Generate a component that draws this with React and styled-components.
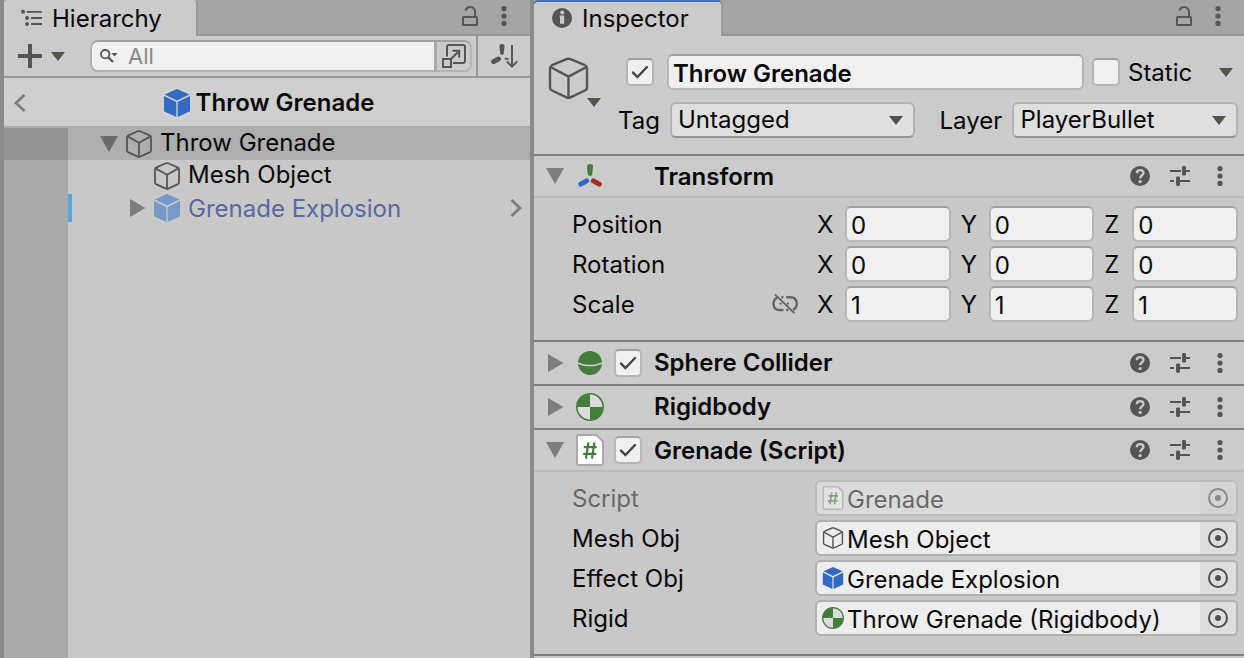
import {useId} from "react";
import styled, {createGlobalStyle} from "styled-components";

const GlobalStyle = createGlobalStyle`
  * {
    box-sizing: border-box;
  }

  body {
    margin: 0;
    background: #8a8a8a;
    color: #090909;
    font: 400 24px/30px Inter, "Liberation Sans", sans-serif;
  }

  button,
  input,
  select {
    margin: 0;
    color: inherit;
    font: inherit;
  }

  svg {
    display: block;
    flex: none;
  }
`;

const Editor = styled.main`
  display: grid;
  grid-template-columns: minmax(0, 526fr) minmax(0, 710fr);
  gap: 4px;
  min-height: 100vh;
  padding-left: 4px;
`;

const Panel = styled.section`
  display: flex;
  flex-direction: column;
  background: #c8c8c8;
`;

const TabBar = styled.header`
  display: flex;
  align-items: flex-start;
  height: 36px;
  background: #a5a5a5;
  box-shadow: inset 0 -2px #989898;
`;

const Tab = styled.h1`
  display: flex;
  align-items: center;
  gap: 10px;
  height: 36px;
  margin: 0 auto 0 0;
  padding: ${(props) => (props.$active ? "2px 32px 0 18px" : "2px 34px 0 16px")};
  border-right: 2px solid #999;
  border-radius: 4px 4px 0 0;
  background: #cbcbcb;
  box-shadow: ${(props) => (props.$active ? "inset 0 2px #4a72b0" : "none")};
  font-size: 24px;
  font-weight: 400;

  & > svg {
    margin-bottom: 2px;
  }
`;

const TabTools = styled.div`
  display: flex;
  gap: 14px;
  padding: 6px 16px 0 0;
`;

const IconButton = styled.button`
  display: grid;
  place-items: center;
  min-width: 20px;
  height: 20px;
  padding: 0;
  border: 0;
  background: transparent;
  cursor: pointer;
`;

const Toolbar = styled.div`
  display: flex;
  align-items: center;
  height: 42px;
  border-bottom: 2px solid #999;
  background: #cbcbcb;
`;

const AddButton = styled(IconButton)`
  grid-auto-flow: column;
  gap: 9px;
  height: 32px;
  margin: 0 25px 0 14px;
`;

const SearchBox = styled.div`
  display: flex;
  flex: 1;
  align-items: center;
  min-width: 0;
  height: 32px;
  margin-right: 4px;
  padding-left: 8px;
  border: 2px solid #b2b2b2;
  border-top-color: #a0a0a0;
  border-radius: 8px;
  background: #f0f0f0;
  overflow: hidden;
`;

const SearchInput = styled.input`
  flex: 1;
  min-width: 0;
  padding: 0 10px;
  border: 0;
  outline: none;
  background: transparent;
  font-size: 22px;

  &::placeholder {
    color: #888;
    opacity: 1;
  }
`;

const PopoutButton = styled(IconButton)`
  width: 36px;
  height: 32px;
  border-left: 3px solid #aaa;
  background: #cbcbcb;
`;

const SortButton = styled(IconButton)`
  width: 54px;
  height: 40px;
  border-left: 2px solid #999;
`;

const PrefabHeader = styled.div`
  display: grid;
  grid-template-columns: 1fr auto 1fr;
  align-items: center;
  height: 50px;
  padding: 2px 6px 0 10px;
  border-bottom: 2px solid #acacac;
  background: #cfcfcf;
`;

const PrefabName = styled.h2`
  display: flex;
  align-items: center;
  gap: 6px;
  margin: 0;
  font-size: 24px;
  font-weight: 600;
`;

const BackButton = styled(IconButton)`
  place-items: center start;
`;

const Tree = styled.ul`
  flex: 1;
  margin: 0;
  padding: 0;
  background: linear-gradient(to right, #aaa 64px, #c8c8c8 64px);
  list-style: none;
`;

const TreeRow = styled.li`
  display: flex;
  align-items: center;
  height: 32px;
  padding-right: 4px;
  background: ${(props) => (props.$selected ? "linear-gradient(to right, #939393 64px, #aeaeae 64px)" : "none")};
  color: ${(props) => (props.$prefab ? "#576aa3" : "inherit")};
`;

const OverrideBar = styled.span`
  width: 4px;
  height: 28px;
  margin-left: 64px;
  background: ${(props) => (props.$visible ? "#5aa5dc" : "transparent")};
`;

const TreeFold = styled.span`
  display: grid;
  place-items: center;
  width: 18px;
  margin: 0 8px 0 ${(props) => 28 + props.$depth * 28}px;
`;

const TreeLabel = styled.span`
  flex: 1;
  padding: ${(props) => (props.$prefab ? "2px 0 0 8px" : "0 0 2px 8px")};
`;

const ObjectHead = styled.div`
  display: flex;
  gap: 16px;
  padding: 18px 6px 16px 14px;
  border-bottom: 2px solid #7f7f7f;
  background: #cbcbcb;
`;

const ObjectIconButton = styled(IconButton)`
  width: 54px;
  height: 54px;
`;

const HeadRows = styled.div`
  display: flex;
  flex: 1;
  flex-direction: column;
  gap: 12px;
  min-width: 0;
`;

const HeadRow = styled.div`
  display: flex;
  align-items: center;
  height: 36px;
`;

const NameRow = styled(HeadRow)`
  gap: 8px;
  padding: 0 2px 0 8px;
`;

const StaticLabel = styled.label`
  flex: none;
  width: 80px;
  padding-top: 2px;
`;

const TagLabel = styled.label`
  flex: none;
  width: 52px;
  padding-top: 2px;
`;

const LayerLabel = styled(TagLabel)`
  width: 73px;
  margin-left: 24px;
`;

const TextInput = styled.input`
  width: 100%;
  min-width: 0;
  height: 36px;
  padding: 2px 4px 0;
  border: 2px solid #b7b7b7;
  border-top-color: #a0a0a0;
  border-radius: 6px;
  outline: none;
  background: #f0f0f0;
`;

const NameInput = styled(TextInput)`
  flex: 1;
  margin-left: 5px;
  font-weight: 600;
`;

const SelectWrap = styled.span`
  display: grid;
  flex: ${(props) => props.$grow} 1 0;
  align-items: center;
  min-width: 0;

  & > * {
    grid-area: 1 / 1;
  }

  & > svg {
    justify-self: end;
    margin-right: 12px;
    pointer-events: none;
  }
`;

const Select = styled.select`
  width: 100%;
  height: 36px;
  padding: 0 32px 0 6px;
  border: 2px solid #b2b2b2;
  border-bottom-color: #939393;
  border-radius: 6px;
  outline: none;
  background: #dfdfdf;
  appearance: none;
`;

const CheckWrap = styled.span`
  display: grid;
  flex: none;
  width: 28px;
  height: 28px;

  & > * {
    grid-area: 1 / 1;
  }

  & > svg {
    visibility: hidden;
    pointer-events: none;
  }

  & > input:checked + svg {
    visibility: visible;
  }
`;

const CheckInput = styled.input`
  width: 28px;
  height: 28px;
  border: 2px solid #b7b7b7;
  border-top-color: #a0a0a0;
  border-radius: 5px;
  background: #f0f0f0;
  appearance: none;
`;

const ComponentHeader = styled.header`
  display: grid;
  grid-template-columns: 20px 28px 28px 1fr auto;
  align-items: center;
  gap: 10px;
  height: ${(props) => (props.$open ? 42 : 44)}px;
  padding: 0 14px 0 12px;
  border-bottom: 2px solid ${(props) => (props.$open ? "#bababa" : "#7f7f7f")};
  background: #cbcbcb;
`;

const ComponentTitle = styled.h2`
  grid-column: 4;
  margin: 0;
  padding: ${(props) => (props.$open ? 2 : 0)}px 0 0 2px;
  font-size: 24px;
  font-weight: 600;
`;

const HeaderTools = styled.div`
  display: flex;
  gap: 20px;
`;

const IconSlot = styled.span`
  display: grid;
  place-items: center;
`;

const FoldSlot = styled(IconSlot)`
  justify-items: start;
`;

const ComponentBody = styled.div`
  display: flex;
  flex-direction: column;
  gap: 4px;
  padding: 8px 6px 18px 38px;
  border-bottom: 2px solid #7f7f7f;
`;

const FieldRow = styled.div`
  display: grid;
  grid-template-columns: minmax(0, 243fr) minmax(0, 423fr);
  align-items: center;
  height: 36px;
`;

const FieldLabel = styled.div`
  display: flex;
  align-items: center;
  justify-content: space-between;
  padding: 2px 17px 0 0;
  opacity: ${(props) => (props.$disabled ? 0.5 : 1)};

  & > svg {
    margin-bottom: 2px;
  }
`;

const Axes = styled.div`
  display: grid;
  grid-template-columns: repeat(3, minmax(0, 1fr));
  gap: 8px;
`;

const Axis = styled.label`
  display: flex;
  align-items: center;
`;

const AxisName = styled.span`
  flex: none;
  width: 30px;
  padding: 2px 0 0 2px;
`;

const ObjectField = styled.div`
  display: flex;
  align-items: center;
  height: 36px;
  padding-left: 5px;
  border: 2px solid #b0b0b0;
  border-radius: 6px;
  background: #ededed;
  overflow: hidden;
  opacity: ${(props) => (props.$disabled ? 0.5 : 1)};
`;

const ObjectInput = styled.input`
  flex: 1;
  min-width: 0;
  padding: 3px 3px 0;
  border: 0;
  outline: none;
  background: transparent;
`;

const PickerButton = styled(IconButton)`
  width: 36px;
  height: 32px;
  background: #dedede;
`;

const CubeOutline = ({width = 26, height = 28, stroke = 1.8}) => (
    <svg width={width} height={height} viewBox="0 0 26 28" fill="none" stroke="#555" strokeWidth={stroke}
         strokeLinejoin="round">
        <path d="M11.8 1.3Q13 .9 14.2 1.3L24 5.6Q25 6 25 7.2V20.6Q25 21.6 24 22.1L14.2 26.6Q13 27 11.8 26.6L2 22.1Q1 21.6 1 20.6V7.2Q1 6 2 5.6Z"/>
        <path d="M1.5 6.4L13 12.8L24.5 6.4M13 12.8V26.8"/>
    </svg>
);

const CubeSolid = ({width = 26, height = 28, color = "#316ac5"}) => (
    <svg width={width} height={height} viewBox="0 0 26 28" fill={color}>
        <path d="M13 0L25.3 5.4L13 11.6L.7 5.4Z"/>
        <path d="M0 7L12.3 13.1V28L0 22.3Z"/>
        <path d="M26 7L13.7 13.1V28L26 22.3Z"/>
    </svg>
);

const Caret = () => (
    <svg width="14" height="9" viewBox="0 0 14 9">
        <path d="M0 0H14L7 9Z" fill="#55554b"/>
    </svg>
);

const Fold = ({open, color = "#7e7e7e"}) => (
    <svg width="18" height={open ? 16 : 18} viewBox={open ? "0 0 18 16" : "0 0 18 18"}>
        <path d={open ? "M0 0H18L9 16Z" : "M2 0V18L17.5 9Z"} fill={color}/>
    </svg>
);

const Dots = () => (
    <svg width="6" height="20" viewBox="0 0 6 20" fill="#555">
        <circle cx="3" cy="2.6" r="2.6"/>
        <circle cx="3" cy="10" r="2.6"/>
        <circle cx="3" cy="17.4" r="2.6"/>
    </svg>
);

const Lock = () => (
    <svg width="16" height="20" viewBox="0 0 16 20" fill="none" stroke="#555" strokeWidth="2">
        <rect x="1" y="11" width="14" height="8" rx=".6"/>
        <path d="M3.4 4.6C4.2 2.2 6 1 8.2 1C11 1 13 3 13 5.8V11"/>
    </svg>
);

const Chevron = ({right}) => (
    <svg width="12" height="18" viewBox="0 0 12 18" fill="none" stroke="#7e7e7e" strokeWidth="2.8">
        <path d={right ? "M1.5 1L10 9L1.5 17" : "M10.5 1L2 9L10.5 17"}/>
    </svg>
);

const ListIcon = () => (
    <svg width="22" height="18" viewBox="0 0 22 18" fill="#555">
        <circle cx="3" cy="2.8" r="2"/>
        <circle cx="7" cy="9" r="2"/>
        <circle cx="7" cy="15" r="2"/>
        <path d="M6.6 1.9H22V3.7H6.6ZM11 8.1H22V9.9H11ZM11 14.1H22V15.9H11Z"/>
    </svg>
);

const InfoIcon = () => (
    <svg width="20" height="20" viewBox="0 0 20 20">
        <circle cx="10" cy="10" r="10" fill="#555"/>
        <circle cx="10.2" cy="4.4" r="2" fill="#cbcbcb"/>
        <path d="M7.6 7.6H12.2V15.8H8V9.2H7.6Z" fill="#cbcbcb"/>
    </svg>
);

const PlusIcon = () => (
    <svg width="24" height="24" viewBox="0 0 24 24">
        <path d="M10 0H14V10H24V14H14V24H10V14H0V10H10Z" fill="#555"/>
    </svg>
);

const SearchIcon = () => (
    <svg width="18" height="14" viewBox="0 0 18 14" fill="none" stroke="#555" strokeWidth="1.8">
        <circle cx="5.2" cy="5.2" r="4.2"/>
        <path d="M8.2 8.2L13 13" strokeWidth="2.2"/>
        <path d="M11.5 4H17.5L14.5 7.4Z" fill="#555" stroke="none"/>
    </svg>
);

const PopoutIcon = () => (
    <svg width="24" height="24" viewBox="0 0 24 24" fill="none" stroke="#555" strokeWidth="2">
        <path d="M5 12.5V3Q5 1 7 1H21Q23 1 23 3V17Q23 19 21 19H11"/>
        <path d="M1 15H9V23H1Z"/>
        <path d="M9 15L17 7M10.5 6.8H17.2V13.5"/>
    </svg>
);

const SortIcon = () => (
    <svg width="27" height="24" viewBox="0 0 27 24" fill="none" stroke="#555">
        <path d="M8.4 2.4Q8.4 0 11 0Q13.6 0 13.6 2.4L12.7 9.6Q12.5 11 11 11Q9.5 11 9.3 9.6Z" fill="#555" stroke="none"/>
        <path d="M2.6 17.6L7.4 15" strokeWidth="5" strokeLinecap="round"/>
        <path d="M13.2 15.2Q14.6 12.8 18 14.6L17.4 16Z" fill="#555" stroke="none"/>
        <path d="M21 1V22.4M15.8 17.4L21 22.6L26.2 17.4" strokeWidth="2"/>
    </svg>
);

const HelpIcon = () => (
    <svg width="20" height="20" viewBox="0 0 20 20">
        <circle cx="10" cy="10" r="10" fill="#555"/>
        <path d="M6.8 7.2C6.8 3.2 13.4 3.2 13.4 6.9C13.4 9.4 10.2 9.4 10.2 12.2" fill="none" stroke="#cbcbcb"
              strokeWidth="2.4"/>
        <circle cx="10.1" cy="15.6" r="1.7" fill="#cbcbcb"/>
    </svg>
);

const PresetIcon = () => (
    <svg width="20" height="20" viewBox="0 0 20 20" fill="#555">
        <rect x="12" width="4" height="9.6" rx="1.4"/>
        <rect x="6" y="10.4" width="4" height="9.6" rx="1.4"/>
        <path d="M0 4H11V6H0ZM16 4H20V6H16ZM0 14H4V16H0ZM10 14H20V16H10Z"/>
    </svg>
);

const UnlinkIcon = () => (
    <svg width="26" height="20" viewBox="0 0 26 20" fill="none" stroke="#666" strokeWidth="2.4">
        <path d="M5 3.8C-.2 6.6 .4 16 7 16H11.4M9.4 3.2H11.4"/>
        <path d="M14.2 3.2H18.6C25.8 3.2 26.6 13.4 21 15.6M14.2 16H16.4"/>
        <path d="M7.6 9.6H9.8M14.8 9.6H17" strokeWidth="1.8"/>
        <path d="M3 .6L22.4 19" strokeWidth="1.8"/>
    </svg>
);

const CheckIcon = () => (
    <svg width="28" height="28" viewBox="0 0 28 28" fill="none" stroke="#444" strokeWidth="2.4"
         strokeLinecap="round">
        <path d="M7 14.6L11.4 19L21 9"/>
    </svg>
);

const TransformIcon = () => (
    <svg width="28" height="28" viewBox="0 0 28 28">
        <path d="M11 4.2Q11 2 14 2Q17 2 17 4.2L16.3 12Q16 14 14 14Q12 14 11.7 12Z" fill="#457e3c"/>
        <path d="M4.8 22.2L10.6 18.9" stroke="#316ac5" strokeWidth="5" strokeLinecap="round"/>
        <path d="M23.2 22.2L17.4 18.9" stroke="#a82a20" strokeWidth="5" strokeLinecap="round"/>
    </svg>
);

const SphereIcon = () => (
    <svg width="28" height="28" viewBox="0 0 28 28">
        <circle cx="14" cy="14" r="12" fill="#457e3c"/>
        <path d="M1.5 14Q14 19.4 26.5 14" fill="none" stroke="#cbcbcb" strokeWidth="1.8"/>
    </svg>
);

const RigidbodyIcon = ({size = 28}) => (
    <svg width={size} height={size} viewBox="0 0 28 28">
        <circle cx="14" cy="14" r="13.2" fill="#dcdcdc" stroke="#457e3c" strokeWidth="1.6"/>
        <path d="M14 14V1A13 13 0 0 0 1 14ZM14 14V27A13 13 0 0 0 27 14Z" fill="#457e3c"/>
    </svg>
);

const ScriptIcon = ({width = 28, height = 32}) => (
    <svg width={width} height={height} viewBox="0 0 28 32">
        <path d="M3 1H20.5L27 7.5V29Q27 31 25 31H3Q1 31 1 29V3Q1 1 3 1Z" fill="#fff" stroke="#aaa" strokeWidth="2"/>
        <path d="M12.4 8.5L10 24.5M18.4 8.5L16 24.5M7.8 13.2H20.8M7.2 19.8H20.2" fill="none" stroke="#457e3c"
              strokeWidth="2.2"/>
    </svg>
);

const TargetIcon = () => (
    <svg width="20" height="20" viewBox="0 0 20 20">
        <circle cx="10" cy="10" r="9" fill="none" stroke="#4f4f4f" strokeWidth="2"/>
        <circle cx="10" cy="10" r="3" fill="#4f4f4f"/>
    </svg>
);

const Checkbox = ({label, id, checked}) => (
    <CheckWrap>
        <CheckInput type="checkbox" id={id} aria-label={label} defaultChecked={checked}/>
        <CheckIcon/>
    </CheckWrap>
);

const PanelTab = ({icon, title, active}) => (
    <TabBar>
        <Tab $active={active}>{icon}{title}</Tab>
        <TabTools>
            <IconButton aria-label={`Lock ${title}`}><Lock/></IconButton>
            <IconButton aria-label={`${title} menu`}><Dots/></IconButton>
        </TabTools>
    </TabBar>
);

const Component = ({title, icon, checkbox, open, children}) => (
    <section>
        <ComponentHeader $open={open}>
            <FoldSlot><Fold open={open}/></FoldSlot>
            <IconSlot>{icon}</IconSlot>
            {checkbox ? <Checkbox label={title} checked/> : null}
            <ComponentTitle $open={open}>{title}</ComponentTitle>
            <HeaderTools>
                <IconButton aria-label={`${title} help`}><HelpIcon/></IconButton>
                <IconButton aria-label={`${title} presets`}><PresetIcon/></IconButton>
                <IconButton aria-label={`${title} menu`}><Dots/></IconButton>
            </HeaderTools>
        </ComponentHeader>
        {open ? <ComponentBody>{children}</ComponentBody> : null}
    </section>
);

const VectorRow = ({name, value, icon}) => (
    <FieldRow role="group" aria-label={name}>
        <FieldLabel>{name}{icon}</FieldLabel>
        <Axes>
            {["X", "Y", "Z"].map((axis) => (
                <Axis key={axis}>
                    <AxisName>{axis}</AxisName>
                    <TextInput defaultValue={value}/>
                </Axis>
            ))}
        </Axes>
    </FieldRow>
);

const ObjectRow = ({name, value, icon, disabled}) => {
    const id = useId();

    return (
        <FieldRow>
            <FieldLabel as="label" htmlFor={id} $disabled={disabled}>{name}</FieldLabel>
            <ObjectField $disabled={disabled}>
                {icon}
                <ObjectInput id={id} value={value} readOnly disabled={disabled}/>
                <PickerButton aria-label={`Select ${name}`} disabled={disabled}><TargetIcon/></PickerButton>
            </ObjectField>
        </FieldRow>
    );
};

const treeItems = [
    {name: "Throw Grenade", depth: 0, fold: <Fold open color="#6c6c6c"/>, selected: true},
    {name: "Mesh Object", depth: 1},
    {name: "Grenade Explosion", depth: 1, fold: <Fold/>, prefab: true},
];

const Hierarchy = () => (
    <Panel>
        <PanelTab icon={<ListIcon/>} title="Hierarchy"/>
        <Toolbar>
            <AddButton aria-label="Create"><PlusIcon/><Caret/></AddButton>
            <SearchBox>
                <SearchIcon/>
                <SearchInput type="text" placeholder="All" aria-label="Search"/>
                <PopoutButton aria-label="Open search window"><PopoutIcon/></PopoutButton>
            </SearchBox>
            <SortButton aria-label="Sort"><SortIcon/></SortButton>
        </Toolbar>
        <PrefabHeader>
            <BackButton aria-label="Back"><Chevron/></BackButton>
            <PrefabName><CubeSolid/>Throw Grenade</PrefabName>
        </PrefabHeader>
        <Tree>
            {treeItems.map(({name, depth, fold, selected, prefab}) => (
                <TreeRow key={name} $selected={selected} $prefab={prefab}>
                    <OverrideBar $visible={prefab}/>
                    <TreeFold $depth={depth}>{fold}</TreeFold>
                    {prefab ? <CubeSolid color="#7599c9"/> : <CubeOutline/>}
                    <TreeLabel $prefab={prefab}>{name}</TreeLabel>
                    {prefab ? <IconButton aria-label={`Open ${name}`}><Chevron right/></IconButton> : null}
                </TreeRow>
            ))}
        </Tree>
    </Panel>
);

const Inspector = () => (
    <Panel>
        <PanelTab icon={<InfoIcon/>} title="Inspector" active/>
        <ObjectHead>
            <ObjectIconButton aria-label="Select icon">
                <svg width="54" height="54" viewBox="0 0 54 54" fill="none" stroke="#555" strokeWidth="2.4"
                     strokeLinejoin="round">
                    <path d="M18.6 5.1Q20.5 4.3 22.4 5.1L37 11.2Q39 12.2 39 14.4V33.4Q39 35.6 37 36.5L22.4 43.4Q20.5 44.2 18.6 43.4L4 36.5Q2 35.6 2 33.4V14.4Q2 12.2 4 11.2Z"/>
                    <path d="M2.6 13L20.5 22.6L38.4 13M20.5 22.6V44"/>
                    <path d="M39 44H53L46 53Z" fill="#55554b" stroke="none"/>
                </svg>
            </ObjectIconButton>
            <HeadRows>
                <NameRow>
                    <Checkbox label="Active" checked/>
                    <NameInput aria-label="Name" defaultValue="Throw Grenade"/>
                    <Checkbox id="static"/>
                    <StaticLabel htmlFor="static">Static</StaticLabel>
                    <IconButton aria-label="Static flags"><Caret/></IconButton>
                </NameRow>
                <HeadRow>
                    <TagLabel htmlFor="tag">Tag</TagLabel>
                    <SelectWrap $grow={246}>
                        <Select id="tag" defaultValue="Untagged">
                            <option>Untagged</option>
                        </Select>
                        <Caret/>
                    </SelectWrap>
                    <LayerLabel htmlFor="layer">Layer</LayerLabel>
                    <SelectWrap $grow={226}>
                        <Select id="layer" defaultValue="PlayerBullet">
                            <option>PlayerBullet</option>
                        </Select>
                        <Caret/>
                    </SelectWrap>
                </HeadRow>
            </HeadRows>
        </ObjectHead>
        <Component title="Transform" icon={<TransformIcon/>} open>
            <VectorRow name="Position" value="0"/>
            <VectorRow name="Rotation" value="0"/>
            <VectorRow name="Scale" value="1" icon={<UnlinkIcon/>}/>
        </Component>
        <Component title="Sphere Collider" icon={<SphereIcon/>} checkbox/>
        <Component title="Rigidbody" icon={<RigidbodyIcon/>}/>
        <Component title="Grenade (Script)" icon={<ScriptIcon/>} checkbox open>
            <ObjectRow name="Script" value="Grenade" icon={<ScriptIcon width={22} height={24}/>} disabled/>
            <ObjectRow name="Mesh Obj" value="Mesh Object" icon={<CubeOutline width={22} height={22}/>}/>
            <ObjectRow name="Effect Obj" value="Grenade Explosion" icon={<CubeSolid width={22} height={22}/>}/>
            <ObjectRow name="Rigid" value="Throw Grenade (Rigidbody)" icon={<RigidbodyIcon size={22}/>}/>
        </Component>
    </Panel>
);

const App = () => (
    <>
        <GlobalStyle/>
        <Editor>
            <Hierarchy/>
            <Inspector/>
        </Editor>
    </>
);

export default App;
